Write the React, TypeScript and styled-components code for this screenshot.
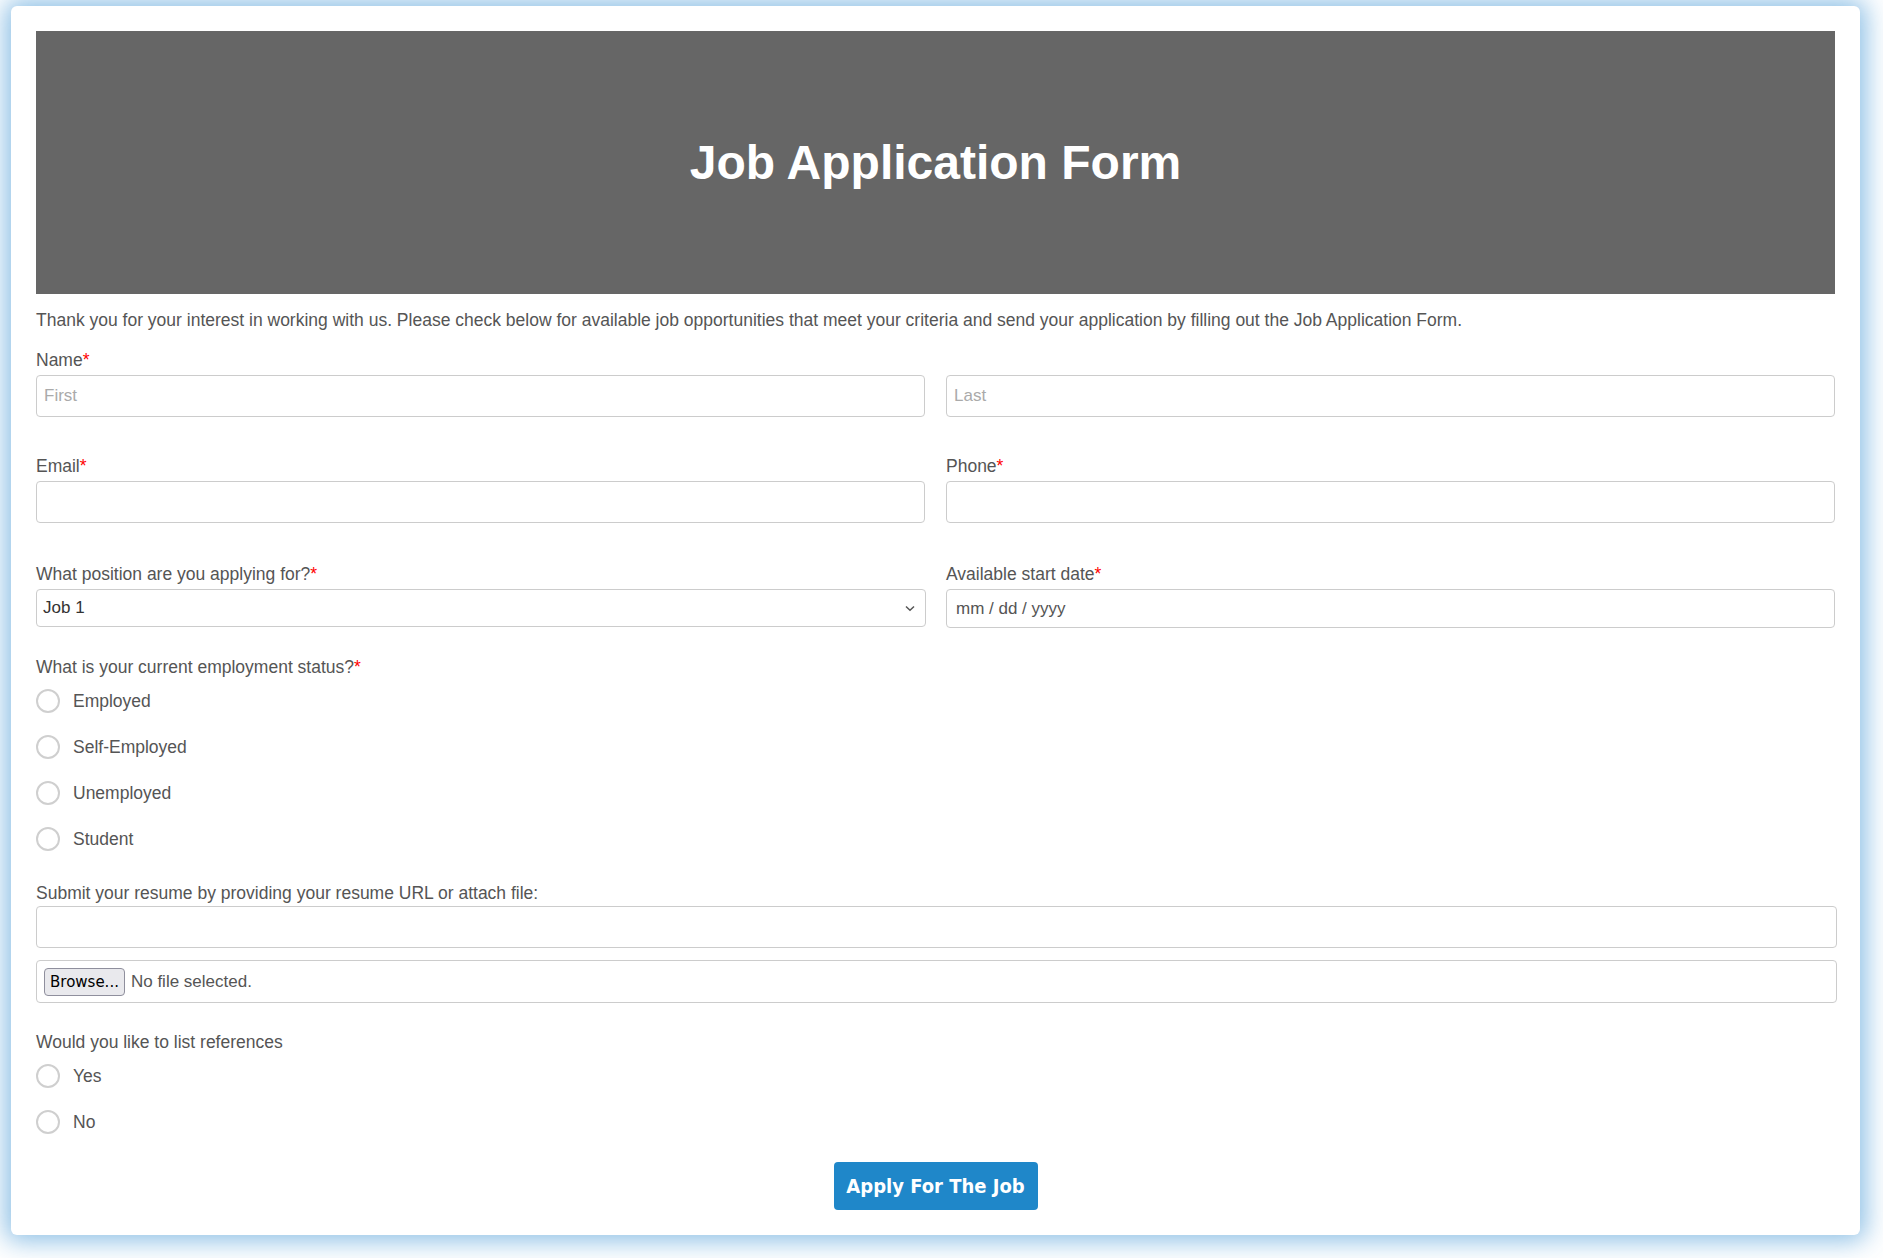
import React from 'react';
import styled, { createGlobalStyle } from 'styled-components';

const GlobalStyle = createGlobalStyle`
    html, body {
        margin: 0;
        padding: 0;
        background: #ffffff;
    }
    body {
        font-family: "Liberation Sans", Arial, sans-serif;
        color: #555555;
    }
`;

const Page = styled.div`
    padding: 6px 23px 24px 11px;
    background: #ffffff;
`;

const Card = styled.form`
    width: 1849px;
    box-sizing: border-box;
    padding: 25px;
    background: #ffffff;
    border-radius: 6px;
    box-shadow: 0 0 26px 6px rgba(120, 180, 225, 0.85);
    display: flex;
    flex-direction: column;
    align-items: stretch;
`;

const Banner = styled.div`
    height: 263px;
    background: #666666;
    display: flex;
    align-items: center;
    justify-content: center;
`;

const Title = styled.h1`
    margin: 0;
    font-family: "Liberation Sans", Arial, sans-serif;
    font-weight: bold;
    font-size: 48px;
    color: #ffffff;
`;

const Intro = styled.p`
    margin: 16px 0 19px 0;
    font-size: 17.5px;
    line-height: 21px;
    color: #555555;
`;

const Row = styled.div<{gapBelow?: number}>`
    display: grid;
    grid-template-columns: 1fr 1fr;
    column-gap: 21px;
    margin-bottom: ${p => p.gapBelow ?? 40}px;
`;

const Field = styled.div`
    display: flex;
    flex-direction: column;
    min-width: 0;
`;

const Label = styled.label<{space?: number}>`
    display: block;
    font-size: 17.5px;
    line-height: 21px;
    color: #555555;
    margin-bottom: ${p => p.space ?? 4}px;
`;

const Req = styled.span`
    color: #ff0000;
`;

const TextInput = styled.input`
    height: 42px;
    box-sizing: border-box;
    width: 100%;
    border: 1px solid #cccccc;
    border-radius: 4px;
    padding: 0 7px;
    font-family: "Liberation Sans", Arial, sans-serif;
    font-size: 17px;
    color: #555555;
    background: #ffffff;
    outline: none;

    &::placeholder {
        color: #aaaaaa;
    }
`;

const WideInput = styled(TextInput)`
    width: calc(100% + 2px);
`;

const SelectBox = styled.div`
    position: relative;
    height: 38px;
    box-sizing: border-box;
    border: 1px solid #cccccc;
    border-radius: 4px;
    margin-right: -1px;
    display: flex;
    align-items: center;
    padding: 0 6px;
    font-size: 17px;
    color: #333333;
`;

const Chevron = styled.svg`
    position: absolute;
    right: 9px;
    top: 50%;
    margin-top: -3px;
`;

const DateBox = styled.div`
    height: 39px;
    box-sizing: border-box;
    border: 1px solid #cccccc;
    border-radius: 4px;
    display: flex;
    align-items: center;
    padding: 0 9px;
    font-size: 17px;
    color: #555555;
`;

const Group = styled.div<{gapBelow?: number}>`
    display: flex;
    flex-direction: column;
    margin-bottom: ${p => p.gapBelow ?? 0}px;
`;

const RadioItem = styled.label`
    height: 46px;
    display: flex;
    align-items: center;
    gap: 13px;
    font-size: 17.5px;
    color: #555555;
    cursor: pointer;
`;

const RadioCircle = styled.span`
    width: 24px;
    height: 24px;
    box-sizing: border-box;
    border: 2px solid #cfcfcf;
    border-radius: 50%;
    background: #ffffff;
    flex: none;
`;

const FileBox = styled.div`
    margin-top: 12px;
    width: calc(100% + 2px);
    height: 43px;
    box-sizing: border-box;
    border: 1px solid #cccccc;
    border-radius: 4px;
    display: flex;
    align-items: center;
    padding: 0 7px;
    gap: 6px;
    font-size: 17px;
    color: #555555;
`;

const BrowseButton = styled.button`
    height: 28px;
    padding: 0 5px;
    border: 1px solid #8f8f9d;
    border-radius: 4px;
    background: #e9e9ed;
    color: #000000;
    font-family: "DejaVu Sans", Verdana, sans-serif;
    font-size: 15px;
    cursor: pointer;
`;

const Actions = styled.div`
    display: flex;
    justify-content: center;
    margin-top: 17px;
`;

const Submit = styled.button`
    width: 204px;
    height: 48px;
    border: none;
    border-radius: 4px;
    background: #1f87c9;
    color: #ffffff;
    font-family: "DejaVu Sans Condensed", "DejaVu Sans", Verdana, sans-serif;
    font-stretch: condensed;
    font-weight: bold;
    font-size: 20px;
    cursor: pointer;
`;

const employment = ['Employed', 'Self-Employed', 'Unemployed', 'Student'];
const references = ['Yes', 'No'];

const Radio: React.FC<{label: string}> = ({label}) => (
    <RadioItem>
        <RadioCircle />
        {label}
    </RadioItem>
);

export default function App() {
    return (
        <>
            <GlobalStyle />
            <Page>
                <Card onSubmit={e => e.preventDefault()}>
                    <Banner>
                        <Title>Job Application Form</Title>
                    </Banner>
                    <Intro>
                        Thank you for your interest in working with us. Please check below for available job opportunities that meet your criteria and send your application by filling out the Job Application Form.
                    </Intro>

                    <Field>
                        <Label>Name<Req>*</Req></Label>
                    </Field>
                    <Row gapBelow={39}>
                        <TextInput placeholder="First" />
                        <TextInput placeholder="Last" />
                    </Row>

                    <Row gapBelow={41}>
                        <Field>
                            <Label>Email<Req>*</Req></Label>
                            <TextInput />
                        </Field>
                        <Field>
                            <Label>Phone<Req>*</Req></Label>
                            <TextInput />
                        </Field>
                    </Row>

                    <Row gapBelow={29}>
                        <Field>
                            <Label>What position are you applying for?<Req>*</Req></Label>
                            <SelectBox>
                                Job 1
                                <Chevron width="12" height="7" viewBox="0 0 12 7">
                                    <path d="M2 1.5 L6 5.2 L10 1.5" fill="none" stroke="#555" strokeWidth="1.5" />
                                </Chevron>
                            </SelectBox>
                        </Field>
                        <Field>
                            <Label>Available start date<Req>*</Req></Label>
                            <DateBox>mm / dd / yyyy</DateBox>
                        </Field>
                    </Row>

                    <Group gapBelow={21}>
                        <Label space={0}>What is your current employment status?<Req>*</Req></Label>
                        {employment.map(item => <Radio key={item} label={item} />)}
                    </Group>

                    <Group gapBelow={29}>
                        <Label space={2}>Submit your resume by providing your resume URL or attach file:</Label>
                        <WideInput />
                        <FileBox>
                            <BrowseButton type="button">Browse...</BrowseButton>
                            No file selected.
                        </FileBox>
                    </Group>

                    <Group>
                        <Label space={0}>Would you like to list references</Label>
                        {references.map(item => <Radio key={item} label={item} />)}
                    </Group>

                    <Actions>
                        <Submit type="submit">Apply For The Job</Submit>
                    </Actions>
                </Card>
            </Page>
        </>
    );
}
